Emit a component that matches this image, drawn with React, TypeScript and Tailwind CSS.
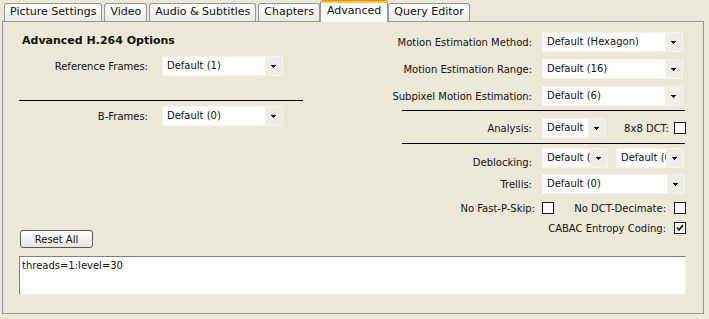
import React from "react";

function Arrow() {
  return (
    <svg width="5" height="3" viewBox="0 0 5 3" shapeRendering="crispEdges">
      <rect x="0" y="0" width="5" height="1" fill="#111" />
      <rect x="1" y="1" width="3" height="1" fill="#111" />
      <rect x="2" y="2" width="1" height="1" fill="#111" />
    </svg>
  );
}

function Select({ value, className }: { value: string; className: string }) {
  return (
    <div className={"flex h-[20px] shrink-0 bg-white border border-[#f4f3ee] " + className}>
      <div className="flex-1 min-w-0 overflow-hidden whitespace-nowrap pl-[4px] leading-[18px]">{value}</div>
      <div className="w-[17px] shrink-0 flex items-center justify-center bg-[#eeede6]">
        <Arrow />
      </div>
    </div>
  );
}

function Check({ checked }: { checked?: boolean }) {
  return (
    <div className="w-[12px] h-[12px] shrink-0 border border-[#1e1e1e] bg-white flex items-center justify-center">
      {checked && (
        <svg width="8" height="8" viewBox="0 0 8 8">
          <path d="M1 3.5 L3 5.8 L7 1.2" fill="none" stroke="#1a1a1a" strokeWidth="1.8" />
        </svg>
      )}
    </div>
  );
}

function Label({ children }: { children: React.ReactNode }) {
  return <div className="flex justify-end w-[142px] shrink-0 whitespace-nowrap">{children}</div>;
}

function Tab({ label, selected }: { label: string; selected?: boolean }) {
  if (selected) {
    return (
      <div className="relative z-10 -mx-[2px] -mb-[1px] h-[22px] flex flex-col rounded-t-[3px] border border-[#919b9c] border-b-0 border-t-[#e68b2c] bg-[#fcfcfe] overflow-hidden">
        <div className="h-[2px] bg-[#ffc73c]" />
        <div className="px-[6px] leading-[15px] text-[11px]">{label}</div>
      </div>
    );
  }
  return (
    <div className="h-[18px] flex items-center px-[5px] rounded-t-[3px] border border-b-0 border-[#919b9c] bg-linear-to-b from-[#ffffff] to-[#ebeae4] text-[11px]">
      {label}
    </div>
  );
}

export default function App() {
  return (
    <div className="w-[709px] h-[319px] overflow-hidden bg-[#ece9d8] text-[10px] text-[#111] font-['DejaVu_Sans',sans-serif]">
      <div className="flex items-end h-[21px] pl-[4px] gap-[2px]">
        <Tab label="Picture Settings" />
        <Tab label="Video" />
        <Tab label="Audio & Subtitles" />
        <Tab label="Chapters" />
        <Tab label="Advanced" selected />
        <Tab label="Query Editor" />
      </div>
      <div className="ml-[2px] w-[702px] h-[293px] border border-[#919b9c] bg-[#ece9d8] flex flex-col">
        <div className="flex">
          {/* left column */}
          <div className="ml-[16px] w-[284px] flex flex-col">
            <div className="mt-[12px] ml-[3px] font-bold text-[11px] leading-[13px]">Advanced H.264 Options</div>
            <div className="mt-[9px] flex items-center">
              <div className="flex justify-end w-[129px] whitespace-nowrap">Reference Frames:</div>
              <Select value="Default (1)" className="ml-[14px] w-[121px]" />
            </div>
            <div className="mt-[24px] h-px bg-black" />
            <div className="mt-[5px] flex items-center">
              <div className="flex justify-end w-[129px] whitespace-nowrap">B-Frames:</div>
              <Select value="Default (0)" className="ml-[14px] w-[121px]" />
            </div>
            <div className="mt-auto">
              <button className="ml-[1px] w-[73px] h-[18px] rounded-[3px] border border-[#555a60] bg-linear-to-b from-[#ffffff] to-[#e6e5dd] text-[10px] leading-[15px]">
                Reset All
              </button>
            </div>
          </div>
          {/* right column */}
          <div className="ml-[87px] w-[296px] flex flex-col pt-[10px] pb-[13px]">
            <div className="flex items-center">
              <Label>Motion Estimation Method:</Label>
              <Select value="Default (Hexagon)" className="ml-[10px] w-[141px]" />
            </div>
            <div className="mt-[7px] flex items-center">
              <Label>Motion Estimation Range:</Label>
              <Select value="Default (16)" className="ml-[10px] w-[141px]" />
            </div>
            <div className="mt-[7px] flex items-center">
              <Label>Subpixel Motion Estimation:</Label>
              <Select value="Default (6)" className="ml-[10px] w-[141px]" />
            </div>
            <div className="mt-[4px] ml-[12px] w-[283px] h-px bg-black" />
            <div className="mt-[7px] flex items-center">
              <Label>Analysis:</Label>
              <Select value="Default" className="ml-[10px] w-[64px]" />
              <div className="ml-auto whitespace-nowrap">8x8 DCT:</div>
              <div className="ml-[5px]">
                <Check />
              </div>
            </div>
            <div className="mt-[5px] ml-[12px] w-[283px] h-px bg-black" />
            <div className="mt-[4px] flex items-center">
              <div className="flex justify-end items-end h-[20px] w-[142px] shrink-0 whitespace-nowrap leading-[11px]">
                Deblocking:
              </div>
              <Select value="Default (0)" className="ml-[10px] w-[66px]" />
              <Select value="Default (0)" className="ml-[8px] w-[68px]" />
            </div>
            <div className="mt-[6px] flex items-center">
              <Label>Trellis:</Label>
              <Select value="Default (0)" className="ml-[10px] w-[143px]" />
            </div>
            <div className="mt-[7px] h-[14px] flex items-center">
              <div className="flex justify-end w-[145px] shrink-0 whitespace-nowrap">No Fast-P-Skip:</div>
              <div className="ml-[7px]">
                <Check />
              </div>
              <div className="ml-auto whitespace-nowrap">No DCT-Decimate:</div>
              <div className="ml-[8px]">
                <Check />
              </div>
            </div>
            <div className="mt-[6px] h-[14px] flex items-center justify-end">
              <div className="whitespace-nowrap">CABAC Entropy Coding:</div>
              <div className="ml-[8px]">
                <Check checked />
              </div>
            </div>
          </div>
        </div>
        <div className="mt-[8px] ml-[16px] w-[667px] h-[39px] bg-white border border-[#7f7f7f] border-r-[#f0efe9] border-b-[#f0efe9] px-[2px] pt-[2px] leading-[13px]">
          threads=1:level=30
        </div>
      </div>
    </div>
  );
}
